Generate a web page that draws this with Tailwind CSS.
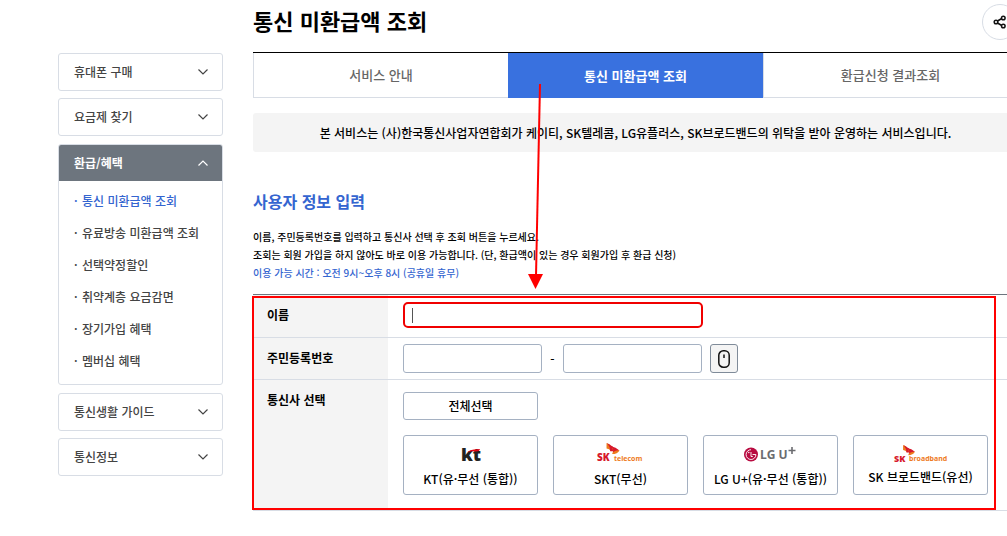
<!DOCTYPE html>
<html lang="ko">
<head>
<meta charset="utf-8">
<title>통신 미환급액 조회</title>
<script src="https://cdn.jsdelivr.net/npm/@tailwindcss/browser@4"></script>
</head>
<body class="bg-white font-['Noto_Sans_CJK_KR',sans-serif] text-xs font-medium text-black overflow-hidden">
<svg class="hidden">
  <symbol id="down" viewBox="0 0 12 8"><path d="M1.500 1.500 6 6l4.500-4.500" fill="none" stroke="currentColor" stroke-width="1.200"/></symbol>
  <symbol id="wings" viewBox="0 0 16 13">
    <path d="M1 0 5 2 6 9Q4 6 1 6Z" fill="#ee7a1c"/>
    <path d="M1.500 0 8 4 8 9H5Q5 4 1.500 0Z" fill="#d7192d"/>
    <path d="M7 5 15 8Q13 12 7 12 9 9 7 5Z" fill="#ee7a1c"/>
    <path d="M6 3.500Q11 4.500 15 8 11 7.500 8 10 9 6 6 3.500Z" fill="#d7192d"/>
  </symbol>
</svg>
<div class="flex gap-[30px] pl-[58px]">
  <nav class="w-[165px] shrink-0 pt-[53px] flex flex-col gap-[7px] text-[#444]" aria-label="메뉴">
    <button class="h-[38px] border border-[#d8dde5] rounded-[3px] pl-[15px] pr-[13px] flex items-center justify-between">휴대폰 구매<svg class="w-3 h-2"><use href="#down"/></svg></button>
    <button class="h-[38px] border border-[#d8dde5] rounded-[3px] pl-[15px] pr-[13px] flex items-center justify-between">요금제 찾기<svg class="w-3 h-2"><use href="#down"/></svg></button>
    <div class="my-px border border-[#d8dde5] rounded-[3px] overflow-hidden">
      <button class="w-full h-9 bg-[#6d757e] text-white pl-[15px] pr-[13px] flex items-center justify-between font-bold">환급/혜택<svg class="w-3 h-2 rotate-180"><use href="#down"/></svg></button>
      <ul class="pt-1 pb-[7px] pl-[15px] leading-8">
        <li class="flex gap-1 text-[#3465d0]"><span class="w-1">·</span><a href="#">통신 미환급액 조회</a></li>
        <li class="flex gap-1"><span class="w-1">·</span><a href="#">유료방송 미환급액 조회</a></li>
        <li class="flex gap-1"><span class="w-1">·</span><a href="#">선택약정할인</a></li>
        <li class="flex gap-1"><span class="w-1">·</span><a href="#">취약계층 요금감면</a></li>
        <li class="flex gap-1"><span class="w-1">·</span><a href="#">장기가입 혜택</a></li>
        <li class="flex gap-1"><span class="w-1">·</span><a href="#">멤버십 혜택</a></li>
      </ul>
    </div>
    <button class="h-[38px] border border-[#d8dde5] rounded-[3px] pl-[15px] pr-[13px] flex items-center justify-between">통신생활 가이드<svg class="w-3 h-2"><use href="#down"/></svg></button>
    <button class="h-[38px] border border-[#d8dde5] rounded-[3px] pl-[15px] pr-[13px] flex items-center justify-between">통신정보<svg class="w-3 h-2"><use href="#down"/></svg></button>
  </nav>

  <main class="relative flex-1 min-w-0 -mr-[11px]">
    <header class="h-[52px] flex items-start justify-between">
      <h1 class="pt-1 text-[22px] leading-8 font-bold">통신 미환급액 조회</h1>
      <button class="mt-1 size-9 shrink-0 rounded-full border border-[#d8dde5] flex items-center justify-center" aria-label="공유">
        <svg class="size-[14px]" viewBox="0 0 14 14" fill="none" stroke="#111" stroke-width="1.500"><path d="M4.500 6 8.800 3.500M4.500 8 8.800 10.500"/><circle cx="3" cy="7" r="1.800"/><circle cx="10.300" cy="3" r="1.800"/><circle cx="10.300" cy="11" r="1.800"/></svg>
      </button>
    </header>
    <div class="grid grid-cols-3 h-[46px] border-t border-black text-[13px]">
      <a href="#" class="border-l border-b border-[#d8dde5] flex items-center justify-center text-[#666]">서비스 안내</a>
      <a href="#" class="bg-[#3971df] text-white flex items-center justify-center font-bold">통신 미환급액 조회</a>
      <a href="#" class="border-x border-b border-[#d8dde5] flex items-center justify-center text-[#666]">환급신청 결과조회</a>
    </div>
    <p class="mt-[15px] h-[39px] rounded-[3px] bg-[#f4f4f4] flex items-center justify-center">본 서비스는 (사)한국통신사업자연합회가 케이티, SK텔레콤, LG유플러스, SK브로드밴드의 위탁을 받아 운영하는 서비스입니다.</p>
    <h2 class="mt-[37px] text-[16px] leading-6 font-bold text-[#3465d0]">사용자 정보 입력</h2>
    <div class="mt-[15px] mb-[12px] text-[10px] leading-[18px]">
      <p>이름, 주민등록번호를 입력하고 통신사 선택 후 조회 버튼을 누르세요.</p>
      <p>조회는 회원 가입을 하지 않아도 바로 이용 가능합니다. (단, 환급액이 있는 경우 회원가입 후 환급 신청)</p>
      <p class="text-[#3465d0]">이용 가능 시간 : 오전 9시~오후 8시 (공휴일 휴무)</p>
    </div>

    <form class="relative border-t border-[#6d757e]">
      <table class="w-full table-fixed border-separate border-spacing-0">
        <tbody>
          <tr>
            <th class="w-[135px] bg-[#f4f4f4] border-b border-[#d8dde5] align-top text-left pl-[14px] pt-[11px] leading-[18px] font-bold"><label for="name">이름</label></th>
            <td class="border-b border-[#d8dde5] pl-[15px] pt-[7px] pb-[9px]">
              <div class="relative w-[300px]">
                <input id="name" type="text" class="block w-full h-[26px] border-2 border-[#f00000] rounded-[5px] px-2 outline-none">
                <span class="absolute left-[9px] top-[6px] w-px h-[15px] bg-[#555]"></span>
              </div>
            </td>
          </tr>
          <tr>
            <th class="bg-[#f4f4f4] border-b border-[#d8dde5] align-top text-left pl-[14px] pt-[11px] leading-[18px] font-bold"><label for="rrn">주민등록번호</label></th>
            <td class="border-b border-[#d8dde5] pl-[15px] py-[6px]">
              <div class="flex items-center">
                <input id="rrn" type="text" class="w-[139px] h-[29px] border border-[#a5b1c2] rounded-[3px] px-2">
                <span class="w-[21px] text-center">-</span>
                <input type="password" aria-label="주민등록번호 뒷자리" class="w-[139px] h-[29px] border border-[#a5b1c2] rounded-[3px] px-2">
                <button type="button" aria-label="마우스 입력기" class="ml-2 w-7 h-[29px] border border-[#7f8b99] rounded-[3px] bg-[#f4f4f4] flex items-center justify-center">
                  <svg class="w-3 h-[18px]" viewBox="0 0 12 18" fill="none" stroke="#111" stroke-width="1.500"><rect x="0.800" y="0.800" width="10.400" height="16.400" rx="4.500"/><path d="M6 4.500v3.500"/></svg>
                </button>
              </div>
            </td>
          </tr>
          <tr>
            <th class="bg-[#f4f4f4] border-b border-[#d8dde5] align-top text-left pl-[14px] pt-[11px] leading-[18px] font-bold">통신사 선택</th>
            <td class="border-b border-[#d8dde5] pl-[15px] pt-3 pb-[15px]">
              <button type="button" class="block w-[135px] h-7 border border-[#a5b1c2] rounded-[3px]">전체선택</button>
              <div class="mt-[15px] flex gap-[15px] whitespace-nowrap leading-[18px]">
                <button type="button" class="w-[135px] h-[60px] shrink-0 border border-[#a5b1c2] rounded-[3px] flex flex-col items-center pt-[7px] gap-[5px]">
                  <svg class="w-7 h-[22px] overflow-visible" viewBox="0 0 28 22"><text x="4" y="18" font-family="Open Sans" font-weight="800" font-size="18" fill="#222">kt</text><path d="M10 9.500Q13 6.500 17 6.500L23 6Q22.500 8.500 19 8.500 14 7.800 10 9.500Z" fill="#e60012"/></svg>
                  KT(유·무선 (통합))</button>
                <button type="button" class="w-[135px] h-[60px] shrink-0 border border-[#a5b1c2] rounded-[3px] flex flex-col items-center pt-[7px] gap-[5px]">
                  <svg class="w-12 h-[22px] overflow-visible" viewBox="0 0 48 22"><use href="#wings" x="8" y="0" width="16" height="12"/><text x="0" y="18" font-family="Open Sans" font-weight="800" font-size="10" fill="#d7192d">SK</text><text x="17" y="18" font-family="Open Sans" font-weight="700" font-size="7" fill="#ee7a1c">telecom</text></svg>
                  SKT(무선)</button>
                <button type="button" class="w-[135px] h-[60px] shrink-0 border border-[#a5b1c2] rounded-[3px] flex flex-col items-center pt-[7px] gap-[5px]">
                  <svg class="w-[54px] h-[22px] overflow-visible" viewBox="0 0 54 22"><circle cx="7" cy="11.500" r="7" fill="#b80b41"/><path d="M7 6.700A4.900 4.900 0 1 0 11.900 11.500H8.500M7 9V13.500h1.800" fill="none" stroke="#fff" stroke-width="0.900"/><circle cx="4.800" cy="9.500" r="0.700" fill="#fff"/><text x="16" y="16" font-family="Open Sans" font-weight="700" font-size="12" fill="#6b6c70">LG U</text><path d="M48 4v7M44.500 7.500h7" stroke="#6b6c70" stroke-width="1.600"/></svg>
                  LG U+(유·무선 (통합))</button>
                <button type="button" class="w-[135px] h-[60px] shrink-0 border border-[#a5b1c2] rounded-[3px] flex flex-col items-center pt-[7px] gap-[3px]">
                  <svg class="w-[54px] h-[22px] overflow-visible" viewBox="0 0 54 22"><use href="#wings" x="7" y="2" width="16" height="11"/><text x="0" y="19" font-family="Open Sans" font-weight="800" font-size="9" fill="#d7192d">SK</text><text x="15" y="18" font-family="Open Sans" font-weight="700" font-size="7" fill="#ee7a1c">broadband</text></svg>
                  SK 브로드밴드(유선)</button>
              </div>
            </td>
          </tr>
        </tbody>
      </table>
      <div class="absolute -left-px top-px right-[22px] bottom-px border-2 border-[#ff0000] pointer-events-none"></div>
    </form>
    <svg class="absolute left-[274px] top-[83px] w-[18px] h-[208px] pointer-events-none" viewBox="0 0 18 208"><path d="M13 1 9 193" stroke="#f00" stroke-width="2"/><path d="M1 191H16L8.500 206Z" fill="#f00"/></svg>
  </main>
</div>
</body>
</html>
